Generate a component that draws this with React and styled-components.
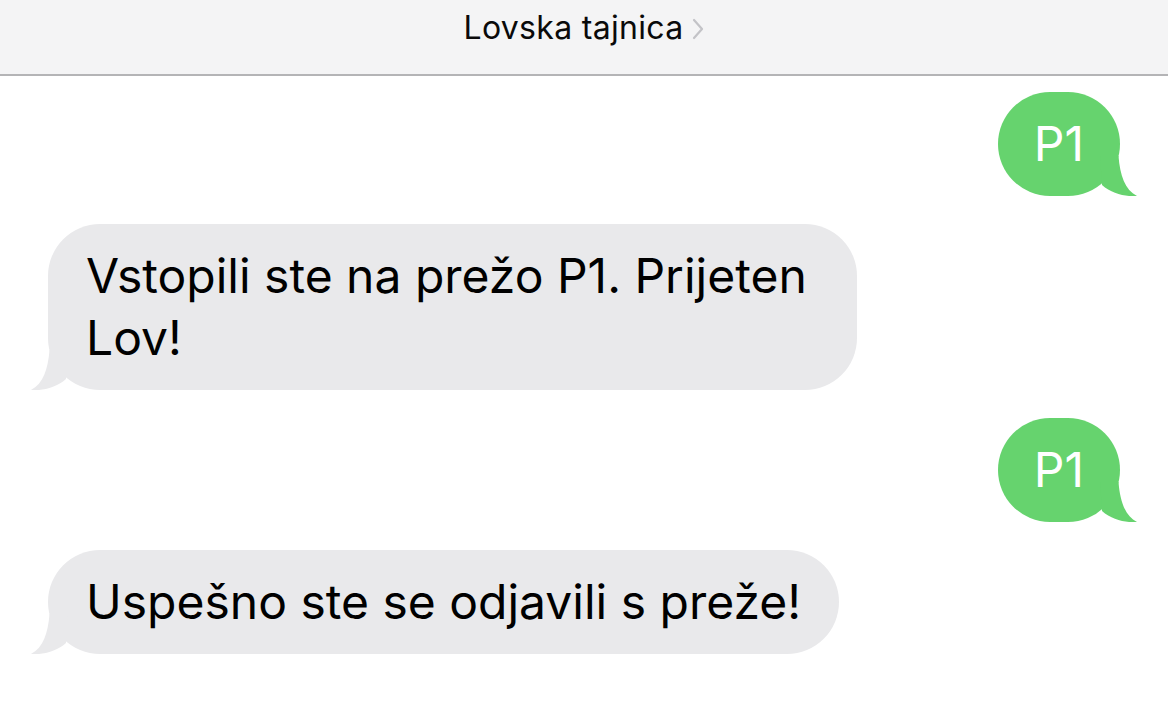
import React from "react";
import styled, { createGlobalStyle } from "styled-components";

const Global = createGlobalStyle`
  html, body { margin: 0; padding: 0; background: #ffffff; }
  body { width: 1168px; height: 710px; overflow: hidden; font-family: Inter, "Noto Sans", "Liberation Sans", sans-serif; -webkit-font-smoothing: antialiased; }
`;

const Page = styled.div`
  width: 1168px;
  height: 710px;
  display: flex;
  flex-direction: column;
  background: #ffffff;
`;

const Header = styled.header`
  height: 76px;
  box-sizing: border-box;
  padding-top: 9px;
  background: #f4f4f5;
  border-bottom: 2px solid #b4b4b6;
  display: flex;
  justify-content: center;
  align-items: flex-start;
  flex-shrink: 0;
`;

const TitleRow = styled.div`
  display: flex;
  align-items: center;
  gap: 9px;
`;

const Title = styled.span`
  font-size: 32px;
  line-height: 38px;
  color: #0a0a0a;
  letter-spacing: 0.3px;
`;

const Chevron = styled.svg`
  width: 12px;
  height: 22px;
  margin-top: 1px;
`;

const Thread = styled.main`
  display: flex;
  flex-direction: column;
  gap: 28px;
  padding: 16px 48px 0 48px;
`;

const Row = styled.div`
  display: flex;
  justify-content: ${(p) => (p.$side === "out" ? "flex-end" : "flex-start")};
`;

const Bubble = styled.div`
  position: relative;
  box-sizing: border-box;
  max-width: 809px;
  border-radius: 52px;
  font-size: 48px;
  line-height: 62px;
  color: ${(p) => (p.$side === "out" ? "#ffffff" : "#000000")};
  background: ${(p) => (p.$side === "out" ? "#66d36e" : "#e9e9eb")};
  padding: ${(p) => (p.$side === "out" ? "21px 36px" : "21px 38px")};
  min-height: 104px;
`;

const Tail = styled.svg`
  position: absolute;
  bottom: 0;
  width: 40px;
  height: 40px;
  ${(p) =>
    p.$side === "out"
      ? "right: -20px;"
      : "left: -20px; transform: scaleX(-1);"}
`;

const Text = styled.span`
  position: relative;
  z-index: 1;
`;

function Message({ side, children }) {
  const fill = side === "out" ? "#66d36e" : "#e9e9eb";
  return (
    <Row $side={side}>
      <Bubble $side={side}>
        <Tail $side={side} viewBox="0 0 40 40">
          <path
            d="M0 0 L18.5 0 C20 19 25 34 37 40 C27 41 12 38 2 29 Z"
            fill={fill}
          />
        </Tail>
        <Text>{children}</Text>
      </Bubble>
    </Row>
  );
}

export default function App() {
  return (
    <Page>
      <Global />
      <Header>
        <TitleRow>
          <Title>Lovska tajnica</Title>
          <Chevron viewBox="0 0 12 22">
            <polyline
              points="2,2 10,11 2,20"
              fill="none"
              stroke="#c3c3c7"
              strokeWidth="2.2"
              strokeLinecap="round"
              strokeLinejoin="round"
            />
          </Chevron>
        </TitleRow>
      </Header>
      <Thread>
        <Message side="out">P1</Message>
        <Message side="in">Vstopili ste na prežo P1. Prijeten Lov!</Message>
        <Message side="out">P1</Message>
        <Message side="in">Uspešno ste se odjavili s preže!</Message>
      </Thread>
    </Page>
  );
}
